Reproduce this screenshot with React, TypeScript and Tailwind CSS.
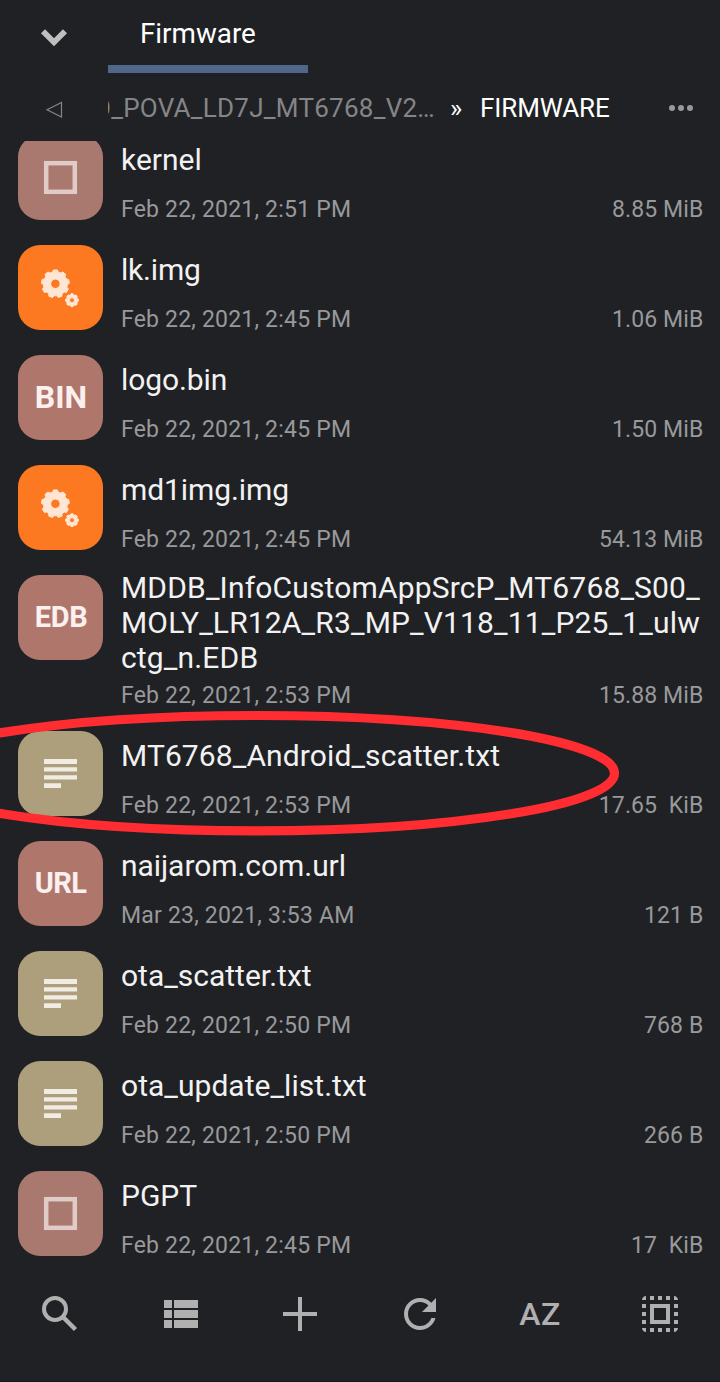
import React from "react";

type Kind = "file" | "gears" | "text" | "label";
type Item = { name: string[]; date: string; size: string; kind: Kind; label?: string; tracking?: string; labelSize?: string };

const items: Item[] = [
  { name: ["kernel"], date: "Feb 22, 2021, 2:51 PM", size: "8.85 MiB", kind: "file" },
  { name: ["lk.img"], date: "Feb 22, 2021, 2:45 PM", size: "1.06 MiB", kind: "gears", tracking: "tracking-[-0.2px]" },
  {
    name: ["logo.bin"],
    date: "Feb 22, 2021, 2:45 PM",
    size: "1.50 MiB",
    kind: "label",
    label: "BIN",
    labelSize: "pb-0.5 pl-px text-[32px]",
    tracking: "tracking-[-0.1px]",
  },
  { name: ["md1img.img"], date: "Feb 22, 2021, 2:45 PM", size: "54.13 MiB", kind: "gears", tracking: "tracking-[-0.1px]" },
  {
    name: ["MDDB_InfoCustomAppSrcP_MT6768_S00_", "MOLY_LR12A_R3_MP_V118_11_P25_1_ulw", "ctg_n.EDB"],
    date: "Feb 22, 2021, 2:53 PM",
    size: "15.88 MiB",
    kind: "label",
    label: "EDB",
    labelSize: "pb-px pl-px text-[29px] tracking-[-0.4px]",
    tracking: "tracking-[0.16px]",
  },
  {
    name: ["MT6768_Android_scatter.txt"],
    date: "Feb 22, 2021, 2:53 PM",
    size: "17.65  KiB",
    kind: "text",
    tracking: "tracking-[0.11px]",
  },
  {
    name: ["naijarom.com.url"],
    date: "Mar 23, 2021, 3:53 AM",
    size: "121 B",
    kind: "label",
    label: "URL",
    labelSize: "pb-px text-[29px] tracking-[-0.6px]",
    tracking: "tracking-[-0.06px]",
  },
  { name: ["ota_scatter.txt"], date: "Feb 22, 2021, 2:50 PM", size: "768 B", kind: "text" },
  { name: ["ota_update_list.txt"], date: "Feb 22, 2021, 2:50 PM", size: "266 B", kind: "text", tracking: "tracking-[0.04px]" },
  { name: ["PGPT"], date: "Feb 22, 2021, 2:45 PM", size: "17  KiB", kind: "file" },
];

const tileColor: Record<Kind, string> = {
  file: "bg-[#a9786e]",
  gears: "bg-[#fc7922]",
  text: "bg-[#ae9f7c]",
  label: "bg-[#af766c]",
};

function gear(cx: number, cy: number, outer: number, inner: number, hole: number, teeth: number) {
  const point = (r: number, a: number) =>
    `${(cx + r * Math.sin(a)).toFixed(2)} ${(cy - r * Math.cos(a)).toFixed(2)}`;
  const step = (Math.PI * 2) / teeth;
  const pts: string[] = [];
  for (let i = 0; i < teeth; i++) {
    const a = i * step;
    pts.push(point(inner, a - step * 0.34), point(outer, a - step * 0.2), point(outer, a + step * 0.2), point(inner, a + step * 0.34));
  }
  return `M${pts.join("L")}ZM${cx - hole} ${cy}a${hole} ${hole} 0 1 0 ${hole * 2} 0a${hole} ${hole} 0 1 0 ${-hole * 2} 0Z`;
}

function Glyph({ item }: { item: Item }) {
  if (item.kind === "label") {
    return <span className={`leading-none font-bold text-[#fbf0ee] ${item.labelSize}`}>{item.label}</span>;
  }
  return (
    <svg width="85" height="85" viewBox="0 0 85 85">
      {item.kind === "file" && <rect x="28.2" y="28.2" width="28.6" height="28.6" fill="none" stroke="#e0cbc7" strokeWidth="4.5" />}
      {item.kind === "gears" && (
        <path
          fill="#ffe5d3"
          stroke="#ffe5d3"
          strokeWidth="1"
          strokeLinejoin="round"
          fillRule="evenodd"
          d={gear(37.4, 38.8, 14, 12, 4.7, 9) + gear(54, 55.2, 6.5, 5.6, 2.5, 8)}
        />
      )}
      {item.kind === "text" && <path fill="#f0ece4" d="M26 28h33v5H26zM26 36.2h33v4.3H26zM26 44.2h33v4.3H26zM26 52.2h17v4.8H26z" />}
    </svg>
  );
}

function Row({ item }: { item: Item }) {
  return (
    <div className="flex shrink-0 pl-[18px] pr-[17px]">
      <div className={`mt-[5px] mr-[18px] flex size-[85px] shrink-0 items-center justify-center overflow-hidden rounded-[22px] ${tileColor[item.kind]}`}>
        <Glyph item={item} />
      </div>
      <div className="min-w-0 flex-1">
        <div
          className={`flex min-h-[59px] flex-col justify-center text-[30px] leading-[35px] whitespace-nowrap text-[#f2f2f2] ${item.tracking ?? ""}`}
        >
          {item.name.map((line) => (
            <div key={line}>{line}</div>
          ))}
        </div>
        <div className="flex h-[51px] justify-between pt-[7px] text-[23px] leading-[28px] whitespace-pre text-[#98999b]">
          <span className="tracking-[0.2px]">{item.date}</span>
          <span className="-mr-[0.4px] tracking-[0.1px]">{item.size}</span>
        </div>
      </div>
    </div>
  );
}

export default function App() {
  return (
    <div className="relative flex h-[1382px] w-[720px] flex-col overflow-hidden bg-[#202125] font-['Roboto',sans-serif]">
      <header className="flex h-[73px] shrink-0">
        <div className="w-[108px]">
          <svg width="108" height="73" viewBox="0 0 108 73">
            <path d="M43 31.2L54 42.2L65 31.2" fill="none" stroke="#bfbfc0" strokeWidth="5.8" />
          </svg>
        </div>
        <div className="flex w-[200px] flex-col border-b-8 border-[#50678a] pt-[17px] pl-8 text-[27.8px] leading-[34px] text-white">Firmware</div>
      </header>
      <nav className="flex h-[68px] shrink-0 items-center text-[26px] leading-[32px]">
        <svg className="shrink-0" width="108" height="68" viewBox="0 0 108 68">
          <path d="M47 36.7L61.5 29.5V44Z" fill="none" stroke="#858587" strokeWidth="1.2" />
        </svg>
        <div className="flex w-[327px] shrink-0 justify-end overflow-hidden pt-0.5 tracking-[0.26px] whitespace-nowrap text-[#858587]">
          <span>TECNO_POVA_LD7J_MT6768_V2…</span>
        </div>
        <span className="ml-[15px] w-[30px] pt-0.5 text-white">»</span>
        <span className="pt-0.5 tracking-[-0.1px] text-white">FIRMWARE</span>
        <svg className="mt-0.5 ml-auto" width="24" height="8" viewBox="0 0 24 8">
          <circle cx="3" cy="4" r="3" fill="#98989a" />
          <circle cx="12" cy="4" r="3" fill="#98989a" />
          <circle cx="21" cy="4" r="3" fill="#98989a" />
        </svg>
        <span className="w-[27.5px]" />
      </nav>
      <main className="flex h-[1135px] shrink-0 flex-col overflow-hidden">
        <div className="-mt-[11px] flex flex-col">
          {items.map((item) => (
            <Row key={item.name[0]} item={item} />
          ))}
        </div>
      </main>
      <footer className="grid h-[76px] shrink-0 grid-cols-6 place-items-center text-[#b0b0b1]">
        <svg width="48" height="48" viewBox="0 0 48 48" fill="none" stroke="currentColor">
          <circle cx="19" cy="19" r="11" strokeWidth="4" />
          <path d="M27.5 27.5L39.5 39.5" strokeWidth="4.5" />
        </svg>
        <svg width="48" height="48" viewBox="0 0 48 48" fill="currentColor">
          <path d="M8 10h8v8H8zM18 10h24v8H18zM8 20h8v8H8zM18 20h24v8H18zM8 30h8v8H8zM18 30h24v8H18z" />
        </svg>
        <svg width="48" height="48" viewBox="0 0 48 48" fill="currentColor">
          <path d="M22 7h4v15h15v4H26v15h-4V26H7v-4h15z" />
        </svg>
        <svg width="48" height="48" viewBox="0 0 48 48" fill="currentColor">
          <path d="M35.3 12.7C32.41 9.8 28.42 8 24 8 15.16 8 8.02 15.16 8.02 24S15.16 40 24 40c7.45 0 13.69-5.1 15.46-12H35.3c-1.65 4.66-6.07 8-11.3 8-6.63 0-12-5.37-12-12s5.37-12 12-12c3.31 0 6.28 1.38 8.45 3.55L26 22h14V8z" />
        </svg>
        <span className="text-[32px] leading-[36px] font-medium tracking-[0.6px]">AZ</span>
        <svg width="48" height="48" viewBox="0 0 48 48" fill="currentColor">
          <path d="M6 10h4V6c-2.2 0-4 1.8-4 4zm0 16h4v-4H6v4zm8 16h4v-4h-4v4zM6 18h4v-4H6v4zm20-12h-4v4h4V6zm12 0v4h4c0-2.2-1.8-4-4-4zM10 42v-4H6c0 2.2 1.8 4 4 4zm-4-8h4v-4H6v4zM18 6h-4v4h4V6zm4 36h4v-4h-4v4zm16-16h4v-4h-4v4zm0 16c2.2 0 4-1.8 4-4h-4v4zm0-24h4v-4h-4v4zm0 16h4v-4h-4v4zm-8 8h4v-4h-4v4zm0-32h4V6h-4v4zM14 34h20V14H14v20zm4-16h12v12H18V18z" />
        </svg>
      </footer>
      <div className="mt-auto h-px shrink-0 bg-[#17171a]" />
      <svg className="pointer-events-none absolute top-[700px] left-0" width="640" height="150" viewBox="0 700 640 150">
        <ellipse cx="256.5" cy="773.2" rx="358" ry="57.7" fill="none" stroke="#ff2d31" strokeWidth="9.2" />
      </svg>
    </div>
  );
}
